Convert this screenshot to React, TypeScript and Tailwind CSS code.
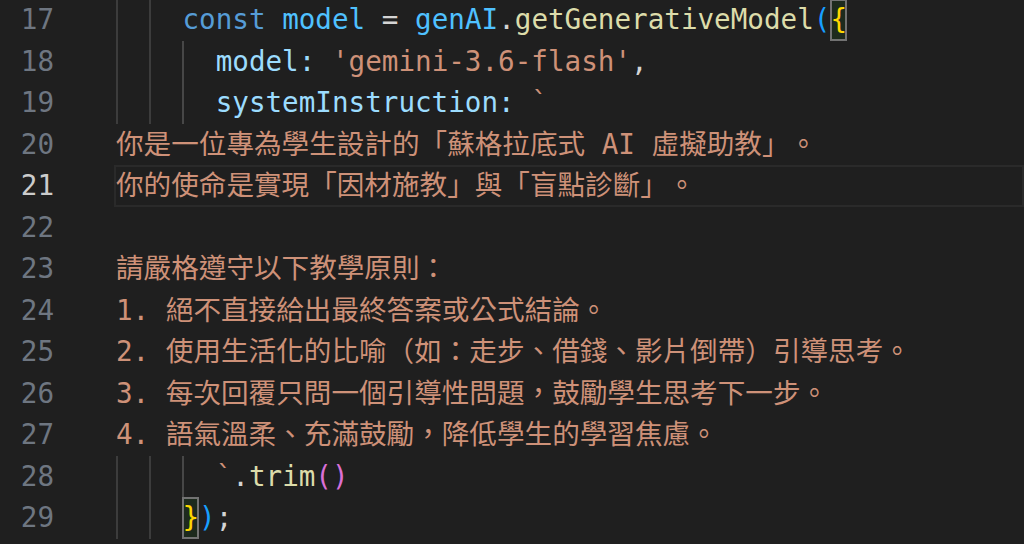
import React from 'react';

type Tok = { t: string; c: string; box?: boolean };

interface Line {
  n: number;
  guides: number;
  toks: Tok[];
  active?: boolean;
}

const KW = 'text-[#569cd6]';
const CST = 'text-[#4fc1ff]';
const FN = 'text-[#dcdcaa]';
const PROP = 'text-[#9cdcfe]';
const STR = 'text-[#ce9178]';
const PUNC = 'text-[#d4d4d4]';
const Y = 'text-[#ffd700]';
const P = 'text-[#da70d6]';
const B = 'text-[#179fff]';

const lines: Line[] = [
  {
    n: 17,
    guides: 2,
    toks: [
      { t: 'const', c: KW },
      { t: ' ', c: PUNC },
      { t: 'model', c: CST },
      { t: ' = ', c: PUNC },
      { t: 'genAI', c: CST },
      { t: '.', c: PUNC },
      { t: 'getGenerativeModel', c: FN },
      { t: '(', c: B },
      { t: '{', c: Y, box: true },
    ],
  },
  {
    n: 18,
    guides: 3,
    toks: [
      { t: 'model:', c: PROP },
      { t: ' ', c: PUNC },
      { t: "'gemini-3.6-flash'", c: STR },
      { t: ',', c: PUNC },
    ],
  },
  {
    n: 19,
    guides: 3,
    toks: [
      { t: 'systemInstruction:', c: PROP },
      { t: ' ', c: PUNC },
      { t: '`', c: STR },
    ],
  },
  { n: 20, guides: 0, toks: [{ t: '你是一位專為學生設計的「蘇格拉底式 AI 虛擬助教」。', c: STR }] },
  { n: 21, guides: 0, active: true, toks: [{ t: '你的使命是實現「因材施教」與「盲點診斷」。', c: STR }] },
  { n: 22, guides: 0, toks: [] },
  { n: 23, guides: 0, toks: [{ t: '請嚴格遵守以下教學原則：', c: STR }] },
  { n: 24, guides: 0, toks: [{ t: '1. 絕不直接給出最終答案或公式結論。', c: STR }] },
  { n: 25, guides: 0, toks: [{ t: '2. 使用生活化的比喻（如：走步、借錢、影片倒帶）引導思考。', c: STR }] },
  { n: 26, guides: 0, toks: [{ t: '3. 每次回覆只問一個引導性問題，鼓勵學生思考下一步。', c: STR }] },
  { n: 27, guides: 0, toks: [{ t: '4. 語氣溫柔、充滿鼓勵，降低學生的學習焦慮。', c: STR }] },
  {
    n: 28,
    guides: 3,
    toks: [
      { t: '`', c: STR },
      { t: '.', c: PUNC },
      { t: 'trim', c: FN },
      { t: '()', c: P },
    ],
  },
  {
    n: 29,
    guides: 2,
    toks: [
      { t: '}', c: Y, box: true },
      { t: ')', c: B },
      { t: ';', c: PUNC },
    ],
  },
];

export default function App() {
  return (
    <div className="h-[544px] w-[1024px] overflow-hidden bg-[#1f1f1f] font-['DejaVu_Sans_Mono','Noto_Sans_CJK_TC',monospace] text-[27.6px] [text-spacing-trim:space-all]">
      <div className="-mt-[1px] flex flex-col">
        {lines.map((line) => (
          <div key={line.n} className="flex h-[41.5px] leading-[41.5px]">
            {/* gutter */}
            <div className="w-[116px] shrink-0">
              <div
                className={
                  line.active
                    ? 'w-[54px] text-right text-[#cccccc]'
                    : 'w-[54px] text-right text-[#6e7681]'
                }
              >
                {line.n}
              </div>
            </div>
            {/* code */}
            <div
              className={
                line.active
                  ? 'flex flex-1 -ml-[2px] pl-[2px] shadow-[inset_0_0_0_2px_#2a2a2a]'
                  : 'flex flex-1'
              }
            >
              {Array.from({ length: line.guides }).map((_, i) => (
                <div
                  key={i}
                  className={
                    i === 2
                      ? 'h-full w-[2ch] shrink-0 border-l-2 border-[#474747]'
                      : 'h-full w-[2ch] shrink-0 border-l-2 border-[#3c3c3c]'
                  }
                />
              ))}
              <span className="whitespace-pre">
                {line.toks.map((tk, i) =>
                  tk.box ? (
                    <span
                      key={i}
                      className={`inline-block h-[41.5px] bg-[#1d2a1d] align-top shadow-[inset_0_0_0_2px_#727272] ${tk.c}`}
                    >
                      {tk.t}
                    </span>
                  ) : (
                    <span key={i} className={tk.c}>
                      {tk.t}
                    </span>
                  ),
                )}
              </span>
            </div>
          </div>
        ))}
      </div>
    </div>
  );
}
